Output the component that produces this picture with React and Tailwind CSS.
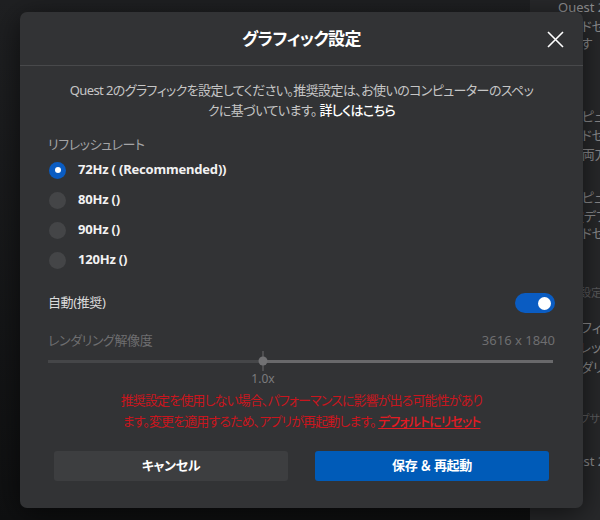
import React from 'react';

const rates = [
    { label: '72Hz ( (Recommended))', checked: true },
    { label: '80Hz ()', checked: false },
    { label: '90Hz ()', checked: false },
    { label: '120Hz ()', checked: false },
];

// 背後のサイドパネル（モーダルで大半が隠れる）
const sideLines = [
    { text: 'ヘッドセット', top: 'mt-[0px]' },
    { text: 'ります', top: 'mt-[-2px]' },
    { text: 'コンピューター', top: 'mt-[54px]' },
    { text: 'ヘッドセット', top: 'mt-[0px]' },
    { text: 'この両方', top: 'mt-[0px]' },
    { text: 'コンピューター', top: 'mt-[24px]' },
    { text: '設定デフォルト', top: 'mt-[0px]' },
    { text: 'ヘッドセット', top: 'mt-[-2px]' },
];

function Radio({ checked }) {
    if (checked) {
        return (
            <span className="flex h-[17px] w-[17px] items-center justify-center rounded-full bg-[#0a5cc2]">
                <span className="h-[6px] w-[6px] rounded-full bg-white" />
            </span>
        );
    }
    return <span className="h-[17px] w-[17px] rounded-full bg-[#444547]" />;
}

export default function App() {
    return (
        <div className="relative flex h-[520px] w-[600px] overflow-hidden font-['Noto_Sans','Noto_Sans_CJK_JP',sans-serif] [font-feature-settings:'palt']">
            <div className="flex-1 bg-linear-to-b from-[#1f2022] to-[#0f1011]" />
            <div className="flex w-[70px] flex-col overflow-hidden bg-[#28292b] pl-[28px] text-[13px] leading-[19px] text-[#8e8e90] whitespace-nowrap">
                <div className="mt-[-2px]">Quest 2</div>
                {sideLines.map((l, i) => (
                    <div key={i} className={l.top}>{l.text}</div>
                ))}
                <div className="mt-[40px] text-[11px] text-[#5e5e60]">詳細設定</div>
                <div className="mt-[16px]">グラフィック</div>
                <div className="mt-[1px]">リフレッシュ</div>
                <div className="mt-[1px]">レンダリング</div>
                <div className="mt-[32px] text-[11px] text-[#5e5e60]">ヘルプサポート</div>
                <div className="mt-[24px]">Quest 2</div>
            </div>

            <div className="absolute left-[20px] top-[12px] flex h-[496px] w-[563px] flex-col rounded-[7px] bg-[#323335] shadow-[0_6px_30px_rgba(0,0,0,0.6)]">
                <div className="relative flex h-[54px] shrink-0 items-center justify-center border-b border-[#48494b]">
                    <h1 className="text-[17px] font-bold tracking-[-0.6px] text-white">グラフィック設定</h1>
                    <button className="absolute right-[19px] top-[19px] text-white">
                        <svg width="17" height="17" viewBox="0 0 17 17" fill="none" stroke="currentColor" strokeWidth="1.6">
                            <path d="M1 1l15 15M16 1L1 16" />
                        </svg>
                    </button>
                </div>

                <div className="flex flex-col px-[28px]">
                    <p className="pt-[14px] text-center text-[13px] leading-[20px] tracking-[-0.6px] text-[#c6c6c6]">
                        <span className="block whitespace-nowrap">Quest 2のグラフィックを設定してください。推奨設定は、お使いのコンピューターのスペッ</span>
                        <span className="block whitespace-nowrap">クに基づいています。 <span className="font-medium text-white">詳しくはこちら</span></span>
                    </p>

                    <div className="mt-[14px] text-[13px] leading-[20px] tracking-[-0.4px] text-[#a4a4a6]">リフレッシュレート</div>

                    <div className="mt-[1px] flex flex-col">
                        {rates.map((r) => (
                            <label key={r.label} className="flex h-[30px] items-center gap-[12px] pl-[1px]">
                                <Radio checked={r.checked} />
                                <span className="text-[13px] font-bold tracking-[-0.2px] text-[#f2f2f2]">{r.label}</span>
                            </label>
                        ))}
                    </div>

                    <div className="mt-[13px] flex h-[30px] items-center justify-between">
                        <span className="text-[13px] tracking-[-0.4px] text-[#dadada]">自動(推奨)</span>
                        <span className="flex h-[20px] w-[40px] items-center justify-end rounded-full bg-[#0a5cc2] pr-[4px]">
                            <span className="h-[13px] w-[13px] rounded-full bg-white" />
                        </span>
                    </div>

                    <div className="mt-[13px] flex h-[20px] items-center justify-between text-[13px] text-[#6e6e70]">
                        <span className="tracking-[-0.4px]">レンダリング解像度</span>
                        <span>3616 x 1840</span>
                    </div>

                    <div className="relative flex h-[20px] items-center pr-[2px]">
                        <div className="h-[3px] w-[42.4%] bg-[#454648]" />
                        <div className="h-[3px] flex-1 bg-[#69696b]" />
                        <div className="absolute left-[42.4%] top-0 h-[20px] w-[1px] -translate-x-1/2 bg-[#6a6a6c]" />
                        <div className="absolute left-[42.4%] top-1/2 h-[9px] w-[9px] -translate-x-1/2 -translate-y-1/2 rounded-full bg-[#717173]" />
                    </div>
                    <div className="relative h-[16px]">
                        <span className="absolute left-[42.4%] -translate-x-1/2 text-[12px] leading-[16px] text-[#7c7c7e]">1.0x</span>
                    </div>

                    <p className="mt-[3px] text-center text-[13px] leading-[21px] tracking-[-0.9px] text-[#c8161e]">
                        <span className="block whitespace-nowrap">推奨設定を使用しない場合、パフォーマンスに影響が出る可能性があり</span>
                        <span className="block whitespace-nowrap">ます。変更を適用するため、アプリが再起動します。 <span className="font-medium text-[#e21b23] underline underline-offset-2">デフォルトにリセット</span></span>
                    </p>
                </div>

                <div className="mt-[19px] flex gap-[27px] px-[34px]">
                    <button className="flex h-[30px] flex-1 items-center justify-center rounded-[3px] bg-[#3d3e40] text-[13px] font-bold tracking-[-0.3px] text-white">キャンセル</button>
                    <button className="flex h-[30px] flex-1 items-center justify-center rounded-[3px] bg-[#005bb8] text-[13px] font-bold tracking-[-0.3px] text-white">保存 ＆ 再起動</button>
                </div>
            </div>
        </div>
    );
}
